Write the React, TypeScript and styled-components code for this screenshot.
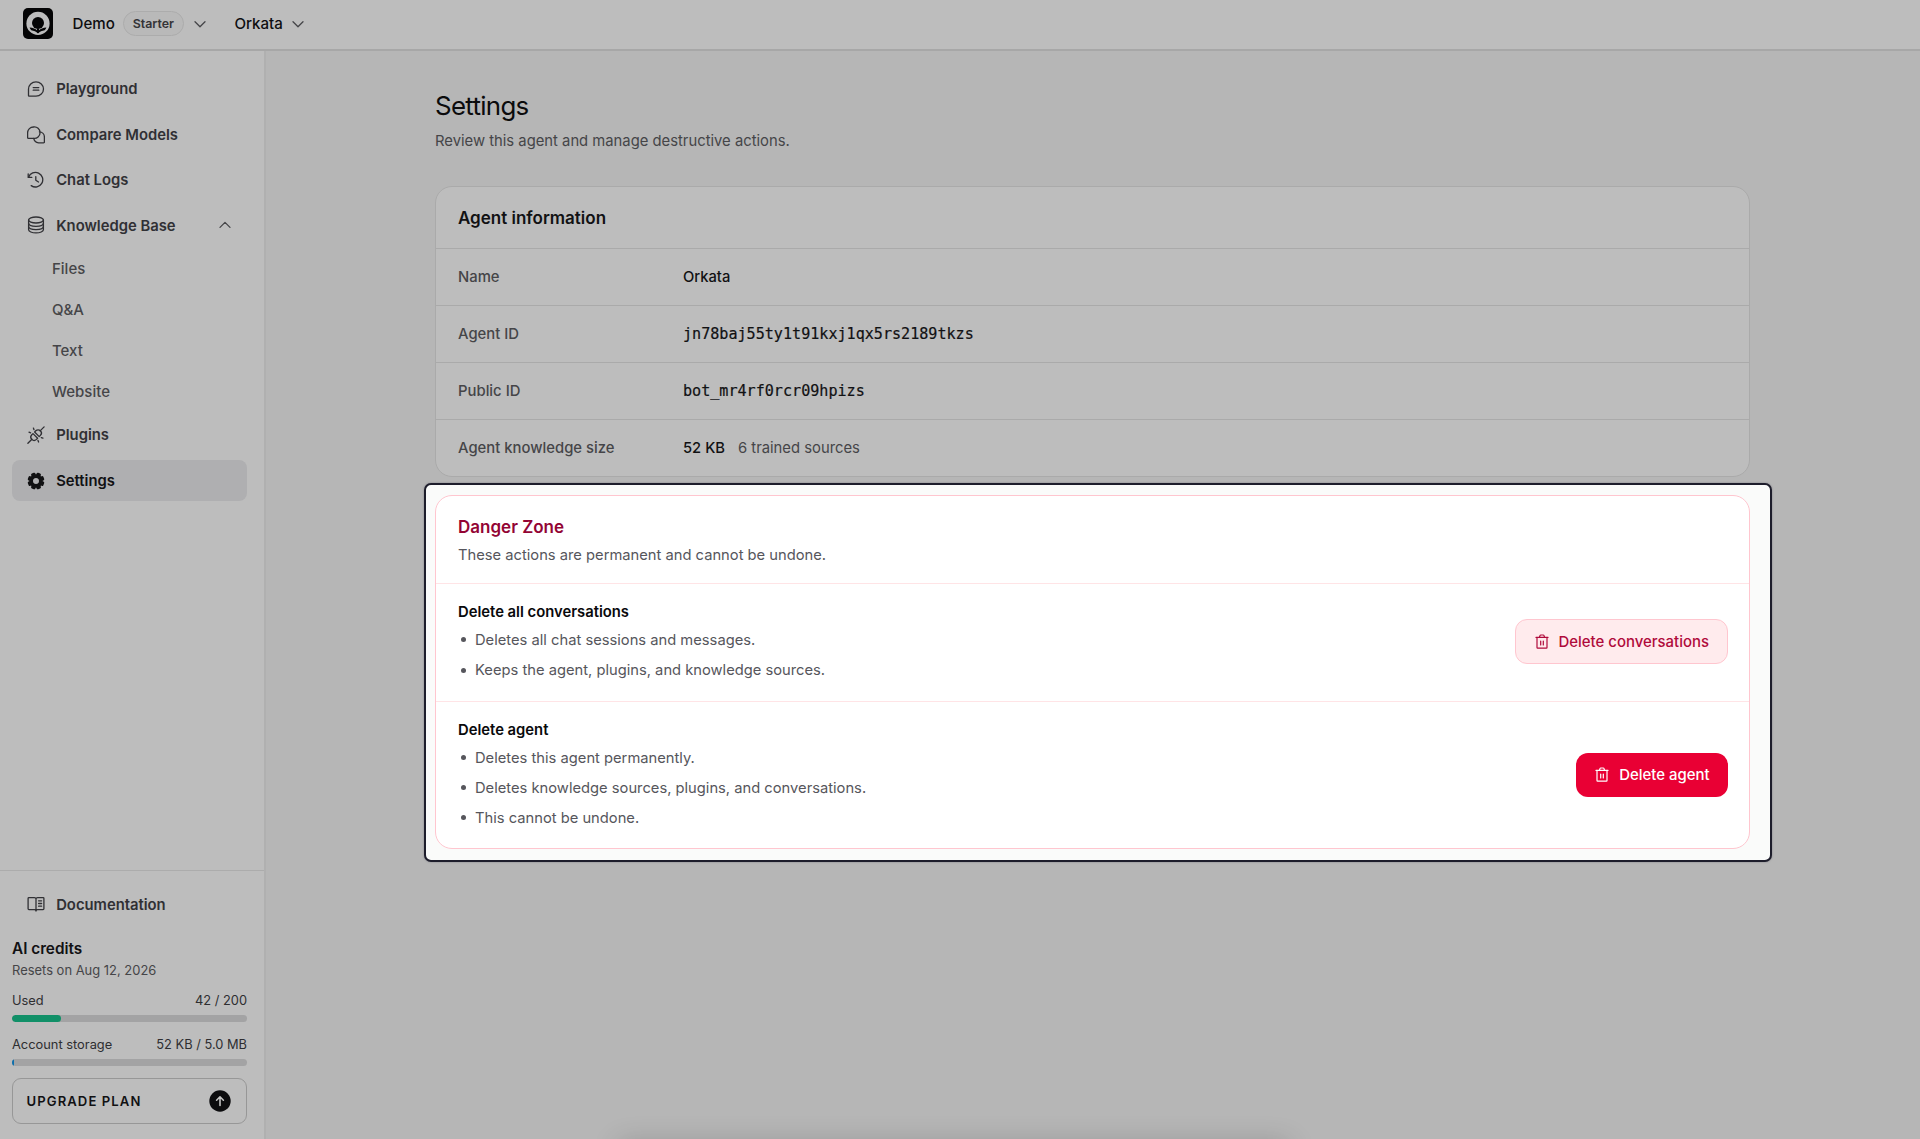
import React from "react";
import styled, { createGlobalStyle } from "styled-components";

const Global = createGlobalStyle`
  * { box-sizing: border-box; }
  html, body { margin: 0; padding: 0; background: #b6b6b6; overflow: hidden; }
  body { font-family: Inter, "Liberation Sans", sans-serif; color: #111113; }
  h1, h2, h3, p, ul { margin: 0; padding: 0; }
  svg { display: block; flex: none; }
`;

const Page = styled.div`
  display: flex;
  flex-direction: column;
  width: 1920px;
  height: 1139px;
  overflow: hidden;
  position: relative;
  background: #b6b6b6;
`;

const TopBar = styled.header`
  display: flex;
  align-items: center;
  height: 51px;
  flex: none;
  padding: 0 23px 2px;
  background: #bdbdbd;
  border-bottom: 2px solid #a7a7a7;
`;

const Crumb = styled.span<{ $left: number; $right?: number }>`
  margin-left: ${(p) => p.$left}px;
  margin-right: ${(p) => p.$right ?? 0}px;
  font-size: 15.1px;
  font-weight: 550;
  line-height: 22px;
  color: #0e0e10;
`;

const Badge = styled.span`
  margin: 0 10.5px 0 8px;
  height: 25px;
  width: 61px;
  display: flex;
  align-items: center;
  justify-content: center;
  border: 1px solid #acacac;
  border-radius: 13px;
  background: #b9b9b9;
  font-size: 12.4px;
  font-weight: 600;
  color: #343437;
`;

const Body = styled.div`
  display: flex;
  flex: 1;
  min-height: 0;
`;

const Sidebar = styled.aside`
  display: flex;
  flex-direction: column;
  width: 266px;
  flex: none;
  background: #bdbdbd;
  border-right: 2px solid #b0b0b0;
`;

const Nav = styled.nav`
  display: flex;
  flex-direction: column;
  gap: 4.45px;
  padding: 17.6px 17px 0 12px;
  flex: 1;
`;

const NavItem = styled.a<{ $active?: boolean }>`
  display: flex;
  align-items: center;
  gap: 11.2px;
  height: 41px;
  flex: none;
  padding: 0 16px 0 15px;
  border-radius: 8px;
  font-size: 14.8px;
  font-weight: 560;
  color: ${(p) => (p.$active ? "#111113" : "#303034")};
  background: ${(p) => (p.$active ? "#afafb1" : "transparent")};
`;

const NavLabel = styled.span`
  flex: 1;
  padding-top: 0.6px;
`;

const SubItem = styled.a`
  display: flex;
  align-items: center;
  height: 36.65px;
  flex: none;
  padding-left: 40px;
  font-size: 15px;
  font-weight: 520;
  color: #454548;
`;

const SideFooter = styled.div`
  display: flex;
  flex-direction: column;
  height: 269.5px;
  flex: none;
  padding: 13.4px 17px 15px 12px;
  border-top: 1px solid #acacac;
`;

const CreditsTitle = styled.h3`
  margin-top: 12px;
  font-size: 15.3px;
  font-weight: 600;
  line-height: 23px;
  color: #111113;
`;

const Resets = styled.p`
  padding-top: 0.6px;
  font-size: 12.95px;
  font-weight: 430;
  line-height: 20px;
  color: #454548;
`;

const Usage = styled.div<{ $top: number }>`
  display: flex;
  justify-content: space-between;
  margin-top: ${(p) => p.$top}px;
  font-size: 12.85px;
  font-weight: 430;
  line-height: 20px;
  color: #2e2e31;
`;

const Track = styled.div`
  margin-top: 4px;
  height: 7px;
  flex: none;
  border-radius: 4px;
  overflow: hidden;
  background: #a3a3a4;
`;

const Fill = styled.div<{ $color: string }>`
  height: 7px;
  border-radius: 4px;
  background: ${(p) => p.$color};
`;

const Upgrade = styled.button`
  display: flex;
  align-items: center;
  justify-content: space-between;
  margin-top: 12px;
  height: 46px;
  padding: 0 15.5px 0 13.5px;
  border: 1px solid #979797;
  border-radius: 9px;
  background: transparent;
  font-family: inherit;
  font-size: 13.1px;
  font-weight: 630;
  letter-spacing: 1.08px;
  color: #111113;
`;

const Main = styled.main`
  flex: 1;
  padding: 37px 170px 0 169px;
`;

const Title = styled.h1`
  font-size: 25.9px;
  font-weight: 420;
  letter-spacing: -0.7px;
  line-height: 35px;
  color: #0b0b0c;
`;

const Subtitle = styled.p`
  margin-top: 7px;
  font-size: 14.8px;
  font-weight: 430;
  line-height: 22px;
  color: #454548;
`;

const Card = styled.section`
  margin-top: 34px;
  border: 1px solid #aaaaaa;
  border-radius: 17px;
  background: #bdbdbd;
  overflow: hidden;
`;

const CardTitle = styled.h2<{ $danger?: boolean }>`
  font-size: 17px;
  font-weight: 610;
  line-height: 26px;
  color: ${(p) => (p.$danger ? "#930434" : "#111113")};
`;

const CardHead = styled.div`
  display: flex;
  align-items: center;
  height: 61px;
  padding: 0 22px;
`;

const InfoRow = styled.div`
  display: grid;
  grid-template-columns: 225px 1fr;
  align-items: center;
  height: 57px;
  padding: 0 22px;
  border-top: 1px solid #aaaaaa;
`;

const Term = styled.span`
  font-size: 14.85px;
  font-weight: 520;
  color: #454548;
`;

const Value = styled.span<{ $mono?: boolean }>`
  display: flex;
  align-items: baseline;
  gap: 13px;
  font-size: ${(p) => (p.$mono ? "15.1px" : "14.75px")};
  font-weight: ${(p) => (p.$mono ? 400 : 500)};
  font-family: ${(p) => (p.$mono ? '"DejaVu Sans Mono", monospace' : "inherit")};
  -webkit-text-stroke: ${(p) => (p.$mono ? "0.2px #111113" : "0")};
  color: #111113;
`;

const Muted = styled.span`
  font-size: 14.8px;
  font-weight: 430;
  color: #454548;
`;

const Spotlight = styled.div`
  margin: 6px -22px 0 -11px;
  padding: 10px 20px 11px 9px;
  border: 2px solid #1d1d2b;
  border-radius: 7px;
  background: #fafbfa;
  box-shadow: 0 0 2px rgba(20, 20, 40, 0.35);
`;

const DangerCard = styled.section`
  border: 1px solid #ffc6cf;
  border-radius: 17px;
  background: #ffffff;
`;

const DangerHead = styled.div`
  height: 86.5px;
  padding: 17.5px 22px 0;
`;

const DangerText = styled.p`
  margin-top: 4px;
  font-size: 14.72px;
  font-weight: 430;
  line-height: 22px;
  color: #56565c;
`;

const DangerRow = styled.div<{ $height: number }>`
  display: flex;
  align-items: center;
  justify-content: space-between;
  height: ${(p) => p.$height}px;
  padding: 0 21.5px 2px 22px;
  border-top: 1px solid #ffe4e6;
`;

const ActionTitle = styled.h3`
  font-size: 14.8px;
  font-weight: 560;
  line-height: 22px;
  color: #09090b;
`;

const Bullets = styled.ul`
  display: flex;
  flex-direction: column;
  gap: 8.2px;
  margin-top: 6px;
  list-style: none;
`;

const Bullet = styled.li`
  display: flex;
  align-items: center;
  gap: 9px;
  padding-left: 3px;
  font-size: 14.72px;
  font-weight: 430;
  line-height: 22px;
  color: #56565c;

  &::before {
    content: "";
    width: 5px;
    height: 5px;
    border-radius: 50%;
    background: #56565c;
  }
`;

const DangerButton = styled.button<{ $solid?: boolean }>`
  display: flex;
  align-items: center;
  gap: 10px;
  height: ${(p) => (p.$solid ? 43.5 : 45.5)}px;
  margin-top: ${(p) => (p.$solid ? 2 : 1)}px;
  padding: ${(p) => (p.$solid ? "0 18px 0 19.5px" : "0 17.5px 0 19px")};
  border: ${(p) => (p.$solid ? "none" : "1px solid #ffc6cf")};
  border-radius: 12px;
  background: ${(p) => (p.$solid ? "#e90034" : "#ffebed")};
  color: ${(p) => (p.$solid ? "#ffffff" : "#b00a3b")};
  font-family: inherit;
  font-size: 14.95px;
  font-weight: 545;
`;

const DockShadow = styled.div`
  position: absolute;
  left: 622px;
  bottom: -18px;
  width: 664px;
  height: 10px;
  box-shadow: 0 0 28px 3px rgba(0, 0, 0, 0.24);
`;

const Line = ({ children }: { children: React.ReactNode }) => (
  <svg width="18" height="18" viewBox="0 0 18 18" fill="none" stroke="currentColor" strokeWidth="1.3" strokeLinecap="round" strokeLinejoin="round">
    {children}
  </svg>
);

const Chevron = ({ up }: { up?: boolean }) => (
  <svg width="12" height="12" viewBox="0 0 12 12" fill="none" stroke="#454548" strokeWidth="1.3" strokeLinecap="round" strokeLinejoin="round">
    <path d={up ? "M1 8.4 6 3.4l5 5" : "M1 3.7l5 5 5-5"} />
  </svg>
);

const ChatIcon = () => (
  <Line>
    <path d="M1.5 9A7.5 7.2 0 1 1 9 16.2H2.300a.8.8 0 0 1-.8-.8z" />
    <path d="M6.2 7.6h5.6M6.2 10.2h5.6" />
  </Line>
);

const CompareIcon = () => (
  <Line>
    <path d="M6.6 1a5.700 5.700 0 1 1 0 11.300H1.400a.8.8 0 0 1-.8-.8V6.700A5.900 5.700 0 0 1 6.600 1z" />
    <path d="M12.400 5.800a5.200 5.200 0 0 1 5 5.200v5a.8.8 0 0 1-.8.8h-5a5.500 5.500 0 0 1-4.900-4.400" />
  </Line>
);

const HistoryIcon = () => (
  <Line>
    <path d="M1.200 2.800v3.600h3.600" />
    <path d="M1.600 6.200A7.300 7.300 0 1 1 4.200 14.600" />
    <path d="M8.800 5.600v3.600l2.700 1.800" />
  </Line>
);

const DatabaseIcon = () => (
  <Line>
    <ellipse cx="9" cy="4" rx="7.4" ry="3" />
    <path d="M1.600 4v9.800c0 1.700 3.300 3.100 7.400 3.100s7.400-1.400 7.400-3.100V4" />
    <path d="M1.600 7.300c0 1.700 3.300 3 7.400 3s7.400-1.300 7.400-3M1.600 10.600c0 1.700 3.300 3 7.400 3s7.400-1.300 7.400-3" />
  </Line>
);

const PlugIcon = () => (
  <Line>
    <path d="M.9 17.3l4-4M13.1 4.9l4-4" />
    <path d="M6 7.6l4.6 4.6-1.2 1.2a3.2 3.2 0 0 1-4.6-4.6z" />
    <path d="M7.6 6l1.200-1.200a3.200 3.200 0 0 1 4.600 4.600L12.200 10.600z" />
    <path d="M6.400 2.100l.6 1.600M2 6.200l1.600.6M14.300 11.600l1.600.6M11 14.400l.6 1.600" />
  </Line>
);

const GearIcon = () => (
  <svg width="18" height="18" viewBox="0 0 18 18">
    <g fill="#111113">
      {[0, 45, 90, 135, 180, 225, 270, 315].map((a) => (
        <rect key={a} x="6.7" y="0.6" width="4.6" height="5" rx="1.3" transform={`rotate(${a + 22.5} 9 9)`} />
      ))}
    </g>
    <circle cx="9" cy="9" r="4.8" fill="none" stroke="#111113" strokeWidth="3.6" />
  </svg>
);

const BookIcon = () => (
  <Line>
    <path d="M9 4.1v11.8M9 4.1C9 3 8.3 2.6 7.4 2.6H1.9a.8.8 0 0 0-.8.8v10.4c0 .5.3.8.8.8h5.6c.8 0 1.5.5 1.5 1.4 0-.9.7-1.4 1.5-1.4h5.6c.5 0 .8-.3.8-.8V3.4a.8.8 0 0 0-.8-.8h-5.5C9.7 2.6 9 3 9 4.1z" />
    <path d="M11.6 5.8h3M11.6 8.5h3M11.6 11.2h3" />
  </Line>
);

const TrashIcon = () => (
  <svg width="14" height="16" viewBox="0 0 14 16" fill="none" stroke="currentColor" strokeWidth="1.2" strokeLinecap="round" strokeLinejoin="round">
    <path d="M1 3.4h12M2 3.4v10.2c0 .4.2.6.6.6h8.8c.4 0 .6-.2.6-.6V3.4M4.4 3.2l.6-1.6c.1-.4.5-.6.9-.6h2.2c.4 0 .8.2.9.6l.6 1.6M5.7 7v4M8.3 7v4" />
  </svg>
);

const Logo = () => (
  <svg width="30" height="31" viewBox="0 0 30 31">
    <rect width="30" height="31" rx="5" fill="#050506" />
    <circle cx="15" cy="15.4" r="11.6" fill="#bdbdbd" />
    <circle cx="15" cy="15" r="6" fill="#050506" />
    <path d="M6.600 19.600c3.200.3 6 1.300 8.400 3.600 2.400-2.300 5.200-3.300 8.400-3.600-.4 1.100-1 1.900-1.700 2.600-2.700.4-4.900 1.400-6.700 3.400-1.800-2-4-3-6.700-3.400-.7-.7-1.300-1.500-1.700-2.600z" fill="#050506" />
    <path d="M14 20.400h2v4h-2z" fill="#050506" />
  </svg>
);

const UpIcon = () => (
  <svg width="22" height="22" viewBox="0 0 22 22">
    <circle cx="11" cy="11" r="10.7" fill="#0c0c0e" />
    <path d="M11 15.5V7M7.6 10.2 11 6.8l3.4 3.4" fill="none" stroke="#c4c4c4" strokeWidth="1.6" strokeLinecap="round" strokeLinejoin="round" />
  </svg>
);

const rows = [
  { term: "Name", value: "Orkata" },
  { term: "Agent ID", value: "jn78baj55ty1t91kxj1qx5rs2189tkzs", mono: true },
  { term: "Public ID", value: "bot_mr4rf0rcr09hpizs", mono: true },
  { term: "Agent knowledge size", value: "52 KB", note: "6 trained sources" },
];

export default function App() {
  return (
    <Page>
      <Global />
      <TopBar>
        <Logo />
        <Crumb $left={19.6}>Demo</Crumb>
        <Badge>Starter</Badge>
        <Chevron />
        <Crumb $left={28} $right={9.5}>Orkata</Crumb>
        <Chevron />
      </TopBar>
      <Body>
        <Sidebar>
          <Nav>
            <NavItem><ChatIcon /><NavLabel>Playground</NavLabel></NavItem>
            <NavItem><CompareIcon /><NavLabel>Compare Models</NavLabel></NavItem>
            <NavItem><HistoryIcon /><NavLabel>Chat Logs</NavLabel></NavItem>
            <NavItem><DatabaseIcon /><NavLabel>Knowledge Base</NavLabel><Chevron up /></NavItem>
            {["Files", "Q&A", "Text", "Website"].map((s) => <SubItem key={s}>{s}</SubItem>)}
            <NavItem><PlugIcon /><NavLabel>Plugins</NavLabel></NavItem>
            <NavItem $active><GearIcon /><NavLabel>Settings</NavLabel></NavItem>
          </Nav>
          <SideFooter>
            <NavItem><BookIcon /><NavLabel>Documentation</NavLabel></NavItem>
            <CreditsTitle>AI credits</CreditsTitle>
            <Resets>Resets on Aug 12, 2026</Resets>
            <Usage $top={11}><span>Used</span><span>42 / 200</span></Usage>
            <Track><Fill $color="#119068" style={{ width: "21%" }} /></Track>
            <Usage $top={12.7}><span>Account storage</span><span>52 KB / 5.0 MB</span></Usage>
            <Track><Fill $color="#0f70ad" style={{ width: "1%" }} /></Track>
            <Upgrade>UPGRADE PLAN<UpIcon /></Upgrade>
          </SideFooter>
        </Sidebar>
        <Main>
          <Title>Settings</Title>
          <Subtitle>Review this agent and manage destructive actions.</Subtitle>
          <Card>
            <CardHead><CardTitle>Agent information</CardTitle></CardHead>
            {rows.map((r) => (
              <InfoRow key={r.term}>
                <Term>{r.term}</Term>
                <Value $mono={r.mono}>{r.value}{r.note && <Muted>{r.note}</Muted>}</Value>
              </InfoRow>
            ))}
          </Card>
          <Spotlight>
            <DangerCard>
              <DangerHead>
                <CardTitle $danger>Danger Zone</CardTitle>
                <DangerText>These actions are permanent and cannot be undone.</DangerText>
              </DangerHead>
              <DangerRow $height={118}>
                <div>
                  <ActionTitle>Delete all conversations</ActionTitle>
                  <Bullets>
                    <Bullet>Deletes all chat sessions and messages.</Bullet>
                    <Bullet>Keeps the agent, plugins, and knowledge sources.</Bullet>
                  </Bullets>
                </div>
                <DangerButton><TrashIcon />Delete conversations</DangerButton>
              </DangerRow>
              <DangerRow $height={147.5}>
                <div>
                  <ActionTitle>Delete agent</ActionTitle>
                  <Bullets>
                    <Bullet>Deletes this agent permanently.</Bullet>
                    <Bullet>Deletes knowledge sources, plugins, and conversations.</Bullet>
                    <Bullet>This cannot be undone.</Bullet>
                  </Bullets>
                </div>
                <DangerButton $solid><TrashIcon />Delete agent</DangerButton>
              </DangerRow>
            </DangerCard>
          </Spotlight>
        </Main>
      </Body>
      <DockShadow />
    </Page>
  );
}
